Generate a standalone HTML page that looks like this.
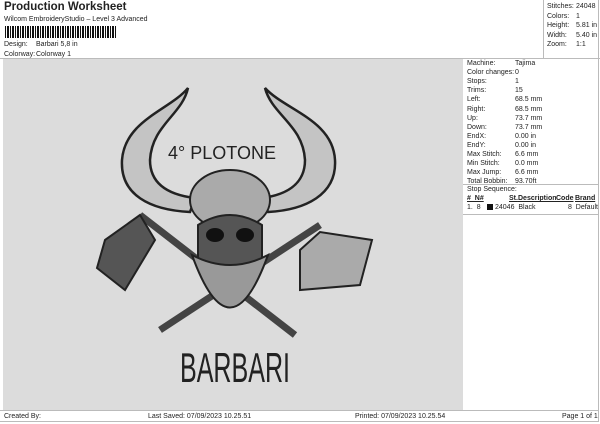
<!DOCTYPE html>
<html><head><meta charset="utf-8"><style>
*{margin:0;padding:0;box-sizing:border-box}
body{width:600px;height:424px;background:#fff;font-family:"Liberation Sans",sans-serif;position:relative;overflow:hidden;color:#222}
.a{position:absolute;white-space:nowrap}
.s{font-size:7px;line-height:8px}
.canvas{position:absolute;left:3px;top:59px;width:460px;height:351px;background:#dcdcdc}
.ln{position:absolute;background:#bbb}
.k{position:absolute;font-size:7px;line-height:8px;white-space:nowrap}
</style></head><body>
<div class="a" style="left:4px;top:1px;font-size:11.5px;font-weight:bold">Production Worksheet</div>
<div class="a s" style="left:4px;top:16px">Wilcom EmbroideryStudio – Level 3 Advanced</div>
<div class="a" style="left:5px;top:26px;width:112px;height:12px;background:repeating-linear-gradient(90deg,#111 0 1px,#fff 1px 2px,#111 2px 4px,#fff 4px 5px)"></div>
<div class="a s" style="left:4px;top:41px">Design:</div><div class="a s" style="left:36px;top:41px">Barbari 5,8 in</div>
<div class="a s" style="left:4px;top:51px">Colorway:</div><div class="a s" style="left:36px;top:51px">Colorway 1</div>
<div class="ln" style="left:543px;top:0;width:1px;height:59px"></div>
<div class="ln" style="left:0;top:58px;width:600px;height:1px"></div>
<div class="ln" style="left:598px;top:0;width:1px;height:422px"></div>
<div class="k" style="left:547px;top:3px">Stitches:</div><div class="k" style="left:576px;top:3px">24048</div>
<div class="k" style="left:547px;top:12.5px">Colors:</div><div class="k" style="left:576px;top:12.5px">1</div>
<div class="k" style="left:547px;top:22px">Height:</div><div class="k" style="left:576px;top:22px">5.81 in</div>
<div class="k" style="left:547px;top:31.5px">Width:</div><div class="k" style="left:576px;top:31.5px">5.40 in</div>
<div class="k" style="left:547px;top:41px">Zoom:</div><div class="k" style="left:576px;top:41px">1:1</div>
<div class="canvas"></div>
<div style="position:absolute;left:467px;top:60px">
<div class="k" style="top:0">Machine:</div><div class="k" style="left:48px;top:0">Tajima</div>
<div class="k" style="top:9.1px">Color changes:</div><div class="k" style="left:48px;top:9.1px">0</div>
<div class="k" style="top:18.2px">Stops:</div><div class="k" style="left:48px;top:18.2px">1</div>
<div class="k" style="top:27.3px">Trims:</div><div class="k" style="left:48px;top:27.3px">15</div>
<div class="k" style="top:36.4px">Left:</div><div class="k" style="left:48px;top:36.4px">68.5 mm</div>
<div class="k" style="top:45.5px">Right:</div><div class="k" style="left:48px;top:45.5px">68.5 mm</div>
<div class="k" style="top:54.6px">Up:</div><div class="k" style="left:48px;top:54.6px">73.7 mm</div>
<div class="k" style="top:63.7px">Down:</div><div class="k" style="left:48px;top:63.7px">73.7 mm</div>
<div class="k" style="top:72.8px">EndX:</div><div class="k" style="left:48px;top:72.8px">0.00 in</div>
<div class="k" style="top:81.9px">EndY:</div><div class="k" style="left:48px;top:81.9px">0.00 in</div>
<div class="k" style="top:91px">Max Stitch:</div><div class="k" style="left:48px;top:91px">6.6 mm</div>
<div class="k" style="top:100.1px">Min Stitch:</div><div class="k" style="left:48px;top:100.1px">0.0 mm</div>
<div class="k" style="top:109.2px">Max Jump:</div><div class="k" style="left:48px;top:109.2px">6.6 mm</div>
<div class="k" style="top:118.3px">Total Bobbin:</div><div class="k" style="left:48px;top:118.3px">93.70ft</div>
</div>
<div class="ln" style="left:463px;top:184px;width:135px;height:1px"></div>
<div class="a s" style="left:467px;top:186px">Stop Sequence:</div>
<div class="a s" style="left:467px;top:195px;font-weight:bold;text-decoration:underline">#&nbsp;&nbsp;N#</div>
<div class="a s" style="left:509px;top:195px;font-weight:bold;text-decoration:underline">St.</div>
<div class="a s" style="left:518px;top:195px;font-weight:bold;text-decoration:underline">Description</div>
<div class="a s" style="left:556px;top:195px;font-weight:bold;text-decoration:underline">Code</div>
<div class="a s" style="left:575px;top:195px;font-weight:bold;text-decoration:underline">Brand</div>
<div class="a s" style="left:467px;top:204px">1.&nbsp;&nbsp;8</div>
<div class="a" style="left:487px;top:204px;width:6px;height:6px;background:#111"></div>
<div class="a s" style="left:495px;top:204px">24046&nbsp;&nbsp;Black</div>
<div class="a s" style="left:568px;top:204px">8&nbsp;&nbsp;Default</div>
<div class="ln" style="left:463px;top:214px;width:135px;height:1px"></div>
<div class="ln" style="left:0;top:410px;width:599px;height:1px"></div>
<div class="ln" style="left:0;top:421px;width:599px;height:1px"></div>
<div class="a s" style="left:4px;top:413px">Created By:</div>
<div class="a s" style="left:148px;top:413px">Last Saved: 07/09/2023 10.25.51</div>
<div class="a s" style="left:355px;top:413px">Printed: 07/09/2023 10.25.54</div>
<div class="a s" style="left:562px;top:413px">Page 1 of 1</div>
<svg class="a" style="left:0;top:0" width="600" height="424">
<g fill="#c4c4c4" stroke="#222" stroke-width="2.5">
<path d="M188,88 C170,110 125,120 122,160 C120,195 150,210 190,212 L195,198 C170,195 150,185 150,160 C152,125 182,115 188,88Z"/>
<path d="M265,88 C285,110 333,120 335,160 C337,195 305,210 268,212 L262,198 C285,195 305,185 305,160 C303,125 272,115 265,88Z"/>
</g>
<g stroke="#444" stroke-width="7" fill="none">
<path d="M140,215 L295,335"/><path d="M320,225 L160,330"/>
</g>
<g stroke="#222" stroke-width="2">
<path d="M105,240 L140,215 L155,240 L125,290 L97,268Z" fill="#555"/>
<path d="M300,250 L320,232 L372,240 L360,285 L300,290Z" fill="#aaa"/>
<ellipse cx="230" cy="200" rx="40" ry="30" fill="#aaa"/>
<path d="M198,225 Q230,205 262,225 L262,265 Q230,280 198,265Z" fill="#555"/>
<path d="M192,255 Q230,360 268,255 Q230,275 192,255Z" fill="#999"/>
</g>
<ellipse cx="215" cy="235" rx="9" ry="7" fill="#111"/>
<ellipse cx="245" cy="235" rx="9" ry="7" fill="#111"/>
<text x="222" y="159" text-anchor="middle" font-family="Liberation Sans" font-size="18" fill="#222">4° PLOTONE</text>
<text x="180" y="382" font-family="Liberation Sans" font-size="42" fill="#222" textLength="110" lengthAdjust="spacingAndGlyphs">BARBARI</text>
</svg>
</body></html>
